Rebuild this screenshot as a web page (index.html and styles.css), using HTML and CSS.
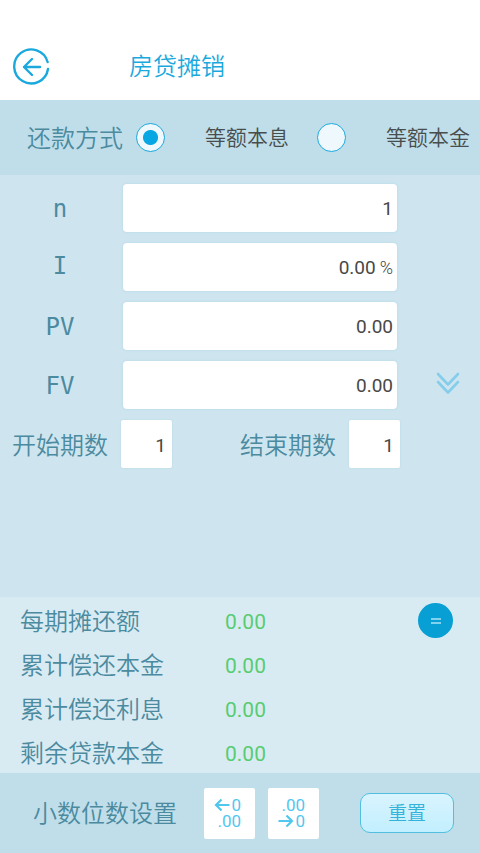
FILE: index.html
```html
<!DOCTYPE html>
<html lang="zh-CN">
<head>
<meta charset="utf-8">
<meta name="viewport" content="width=device-width, initial-scale=1">
<title>房贷摊销</title>
<link rel="stylesheet" href="styles.css">
</head>
<body>
<form class="app">
  <header class="header">
    <button type="button" class="back" aria-label="返回">
      <svg width="38" height="38" viewBox="0 0 38 38" fill="none" stroke="#1ba9dd" stroke-width="2.4" stroke-linecap="round" stroke-linejoin="round">
        <path d="M35.600 14A17 17 0 1 0 36 21"/>
        <path d="M28 19H12M20 11L12 19L20 27"/>
      </svg>
    </button>
    <h1 class="title">房贷摊销</h1>
  </header>

  <div class="method" role="radiogroup" aria-labelledby="method-label">
    <span class="method-label" id="method-label">还款方式</span>
    <label class="option"><input type="radio" name="method" checked>等额本息</label>
    <label class="option"><input type="radio" name="method">等额本金</label>
  </div>

  <main class="fields">
    <div class="row">
      <label class="name" for="n">n</label>
      <span class="box"><input id="n" value="1" inputmode="numeric"></span>
    </div>
    <div class="row">
      <label class="name raised" for="rate">I</label>
      <span class="box"><input id="rate" value="0.00" inputmode="decimal"><span class="unit">%</span></span>
    </div>
    <div class="row">
      <label class="name" for="pv">PV</label>
      <span class="box"><input id="pv" value="0.00" inputmode="decimal"></span>
    </div>
    <div class="row">
      <label class="name" for="fv">FV</label>
      <span class="box"><input id="fv" value="0.00" inputmode="decimal"></span>
      <button type="button" class="expand" aria-label="展开">
        <svg width="24" height="24" viewBox="0 0 24 24" fill="none" stroke="#86cdec" stroke-width="2.6" stroke-linecap="round" stroke-linejoin="round">
          <path d="M2 3L12 13.500L22 3M2 11L12 21.500L22 11"/>
        </svg>
      </button>
    </div>
    <div class="periods">
      <label for="start">开始期数</label>
      <input class="period" id="start" value="1" inputmode="numeric">
      <label class="end-label" for="end">结束期数</label>
      <input class="period" id="end" value="1" inputmode="numeric">
    </div>
  </main>

  <section class="results">
    <dl class="list">
      <div class="result"><dt>每期摊还额</dt><dd>0.00</dd></div>
      <div class="result"><dt>累计偿还本金</dt><dd>0.00</dd></div>
      <div class="result"><dt>累计偿还利息</dt><dd>0.00</dd></div>
      <div class="result"><dt>剩余贷款本金</dt><dd>0.00</dd></div>
    </dl>
    <button type="button" class="equals" aria-label="计算">
      <svg width="12" height="8" viewBox="0 0 12 8" stroke="#a9e4f8" stroke-width="1.3"><path d="M1 2H11M1 6H11"/></svg>
    </button>
  </section>

  <footer class="footer">
    <span class="footer-label">小数位数设置</span>
    <button type="button" class="digits" aria-label="增加小数位">
      <span class="line"><svg width="16" height="12" viewBox="0 0 16 12" fill="none" stroke="#52c7ee" stroke-width="2.2"><path d="M15.500 6H2M7.500 .5L2 6L7.500 11.500"/></svg>0</span>
      <span class="line">.00</span>
    </button>
    <button type="button" class="digits" aria-label="减少小数位">
      <span class="line">.00</span>
      <span class="line"><svg width="16" height="12" viewBox="0 0 16 12" fill="none" stroke="#52c7ee" stroke-width="2.2"><path d="M.5 6H14M8.500 .5L14 6L8.500 11.500"/></svg>0</span>
    </button>
    <button type="reset" class="reset">重置</button>
  </footer>
</form>
</body>
</html>
```

FILE: styles.css
```css
* {
  box-sizing: border-box;
}

body {
  margin: 0;
  color: #4b8a9f;
  background: #cee5ef;
  font-family: Roboto, "Noto Sans CJK SC", sans-serif;
  font-size: 24px;
  font-weight: 350;
  line-height: 32px;
}

button,
input {
  margin: 0;
  padding: 0;
  border: 0;
  background: none;
  color: inherit;
  font: inherit;
}

button {
  display: grid;
  place-items: center;
  cursor: pointer;
}

svg {
  display: block;
}

.app {
  display: flex;
  flex-direction: column;
  min-height: 100vh;
}

.header {
  display: flex;
  align-items: center;
  gap: 79px;
  padding: 34px 12px 0;
  height: 100px;
  background: #fff;
}

.title {
  margin: 0;
  color: #1ba9dd;
  font-size: 24px;
  font-weight: 350;
}

.method {
  display: flex;
  align-items: center;
  height: 75px;
  padding-left: 27px;
  background: #bfdeea;
  white-space: nowrap;
}

.method-label {
  margin-right: 13px;
  padding-top: 2px;
}

.option {
  display: flex;
  align-items: center;
  gap: 40px;
  margin-right: 28px;
  color: #484d4d;
  font-size: 21px;
}

.option:last-child {
  margin-right: 0;
}

.option input {
  appearance: none;
  width: 29px;
  height: 29px;
  border: 1px solid #1ba9dd;
  border-radius: 50%;
  background: #eff8fd;
}

.option input:checked {
  background: radial-gradient(circle, #06a7e2 7px, #eff8fd 8px);
}

.fields {
  display: flex;
  flex: 1;
  flex-direction: column;
  gap: 11px;
  padding-top: 9px;
}

.row {
  display: grid;
  grid-template-columns: 120px 1fr 83px;
  align-items: center;
}

.name {
  padding-top: 2px;
  font-family: "DejaVu Sans Mono", monospace;
  text-align: center;
}

.raised {
  padding: 0 0 2px;
}

.box {
  display: flex;
  align-items: center;
  height: 48px;
  margin-left: 3px;
  padding: 2px 4px 0 0;
  border-radius: 4px;
  background: #fff;
  box-shadow: 0 0 3px #b2d6e4;
  color: #484848;
  font-size: 19px;
}

.box input {
  flex: 1;
  min-width: 0;
  font-weight: 400;
  text-align: right;
}

.unit {
  margin-left: 4px;
  font-size: 18px;
}

.expand {
  width: 24px;
  margin: 0 0 4px 39px;
}

.periods {
  display: flex;
  align-items: center;
  padding: 0 80px 0 12px;
}

.periods label {
  padding-top: 3px;
}

.period {
  width: 51px;
  height: 48px;
  margin-left: 13px;
  padding: 2px 6px 0 0;
  border-radius: 2px;
  background: #fff;
  box-shadow: 0 0 2px #b2d6e4;
  color: #484848;
  font-size: 19px;
  font-weight: 400;
  text-align: right;
}

.end-label {
  margin-left: auto;
}

.results {
  display: flex;
  align-items: flex-start;
  justify-content: space-between;
  padding: 0 27px 0 20px;
  background: #d8ebf3;
}

.list {
  display: grid;
  margin: 0;
}

.result {
  display: grid;
  grid-template-columns: 205px 1fr;
  align-items: center;
  height: 44px;
}

.result dt {
  padding-top: 5px;
}

.result dd {
  margin: 0;
  padding-top: 5px;
  color: #59cc72;
  font-size: 21px;
  font-weight: 400;
}

.equals {
  width: 35px;
  height: 35px;
  margin-top: 6px;
  border-radius: 50%;
  background: #079fd4;
}

.footer {
  display: flex;
  align-items: center;
  height: 80px;
  padding: 0 26px 0 33px;
  background: #bfdeea;
}

.footer-label {
  margin-right: 27px;
  padding-top: 2px;
}

.digits {
  align-content: center;
  justify-items: end;
  width: 51px;
  height: 51px;
  margin-right: 13px;
  padding-right: 14px;
  border-radius: 2px;
  background: #fff;
  color: #52c7ee;
  font-size: 17px;
  font-weight: 400;
  line-height: 16px;
}

.line {
  display: flex;
  align-items: center;
  gap: 1px;
}

.reset {
  width: 94px;
  height: 40px;
  margin-left: auto;
  padding-top: 2px;
  border: 1px solid #52bfe0;
  border-radius: 10px;
  background: linear-gradient(#d9f4fe, #c2effe);
  color: #35b2da;
  font-size: 19px;
}
```
